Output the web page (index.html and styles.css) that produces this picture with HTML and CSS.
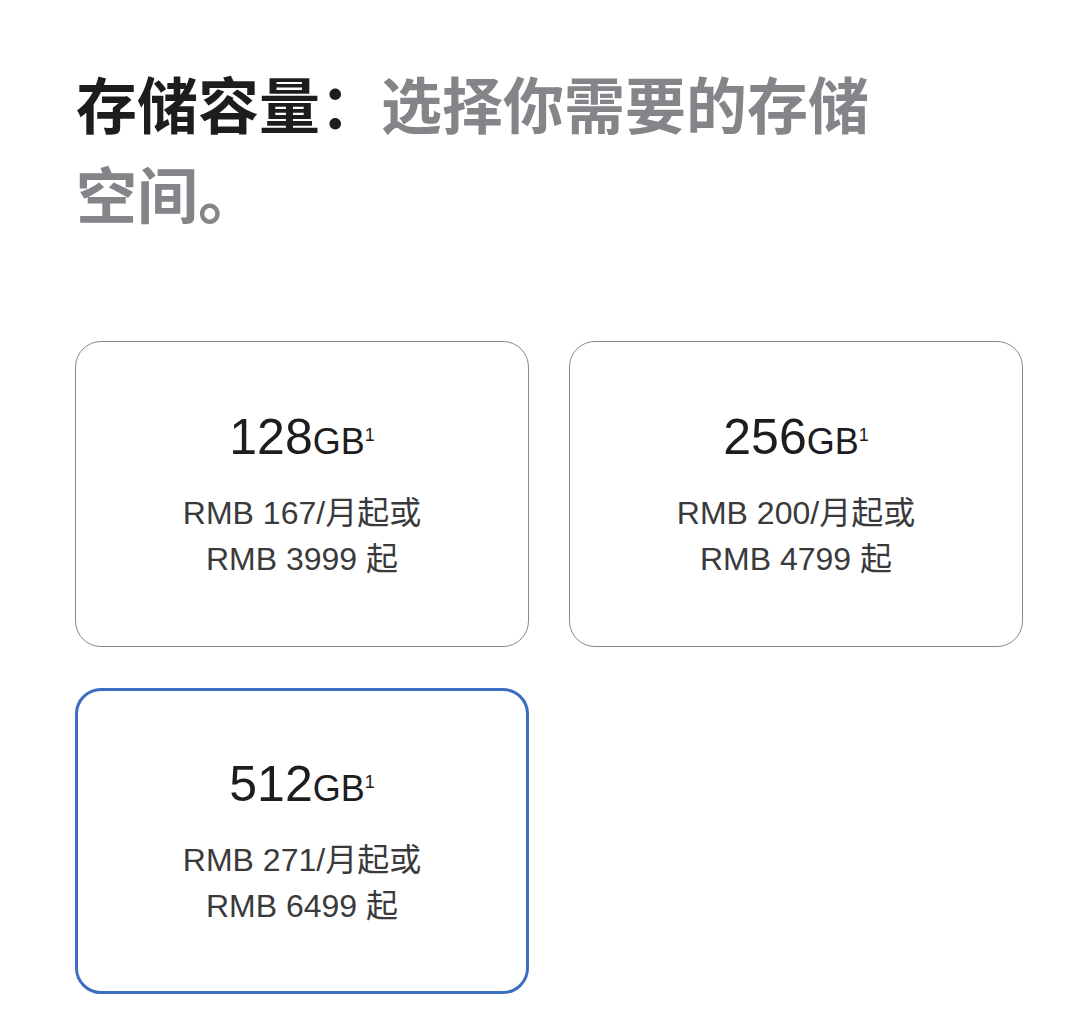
FILE: index.html
```html
<!DOCTYPE html>
<html lang="zh-CN">
<head>
    <meta charset="UTF-8">
    <meta name="viewport" content="width=device-width, initial-scale=1.0">
    <title>存储容量</title>
    <link rel="stylesheet" href="styles.css">
</head>
<body>
    <section class="storage">
        <h1 class="storage-title">存储容量：<span class="muted">选择你需要的存储空间。</span></h1>

        <div class="storage-options">
            <div class="storage-option" data-size="128">
                <div class="capacity">128<span class="unit">GB</span><sup class="note">1</sup></div>
                <p class="price">RMB 167/月起或<br>RMB 3999 起</p>
            </div>
            <div class="storage-option" data-size="256">
                <div class="capacity">256<span class="unit">GB</span><sup class="note">1</sup></div>
                <p class="price">RMB 200/月起或<br>RMB 4799 起</p>
            </div>
            <div class="storage-option selected" data-size="512">
                <div class="capacity">512<span class="unit">GB</span><sup class="note">1</sup></div>
                <p class="price">RMB 271/月起或<br>RMB 6499 起</p>
            </div>
        </div>
    </section>
</body>
</html>
```

FILE: styles.css
```css
body {
    margin: 0;
    padding: 0;
    background-color: #fff;
    color: #1d1d1f;
    font-family: "Liberation Sans", "Noto Sans CJK SC", sans-serif;
}

.storage {
    padding: 58px 59px 40px 76px;
}

.storage-title {
    max-width: 840px;
    margin: 0 0 103px 0;
    font-family: "Noto Sans CJK SC", sans-serif;
    font-size: 61px;
    line-height: 90px;
    font-weight: 700;
    color: #1d1d1f;
}

.storage-title .muted {
    color: #848489;
}

.storage-options {
    display: grid;
    grid-template-columns: 454px 454px;
    column-gap: 40px;
    row-gap: 41px;
    margin-left: -1px;
}

.storage-option {
    box-sizing: border-box;
    height: 306px;
    border: 1.5px solid #8a8a8e;
    border-radius: 26px;
    display: flex;
    flex-direction: column;
    justify-content: center;
    align-items: center;
    text-align: center;
    cursor: pointer;
}

.storage-option.selected {
    border: 3px solid #3d6dc0;
}

.capacity {
    font-size: 50px;
    line-height: 60px;
    color: #1d1d1f;
}

.capacity .unit {
    font-size: 36px;
}

.capacity .note {
    font-size: 18px;
    vertical-align: 13px;
    line-height: 0;
}

.price {
    margin: 18px 0 0 0;
    font-size: 32px;
    line-height: 46px;
    color: #3a3a3c;
}
```
